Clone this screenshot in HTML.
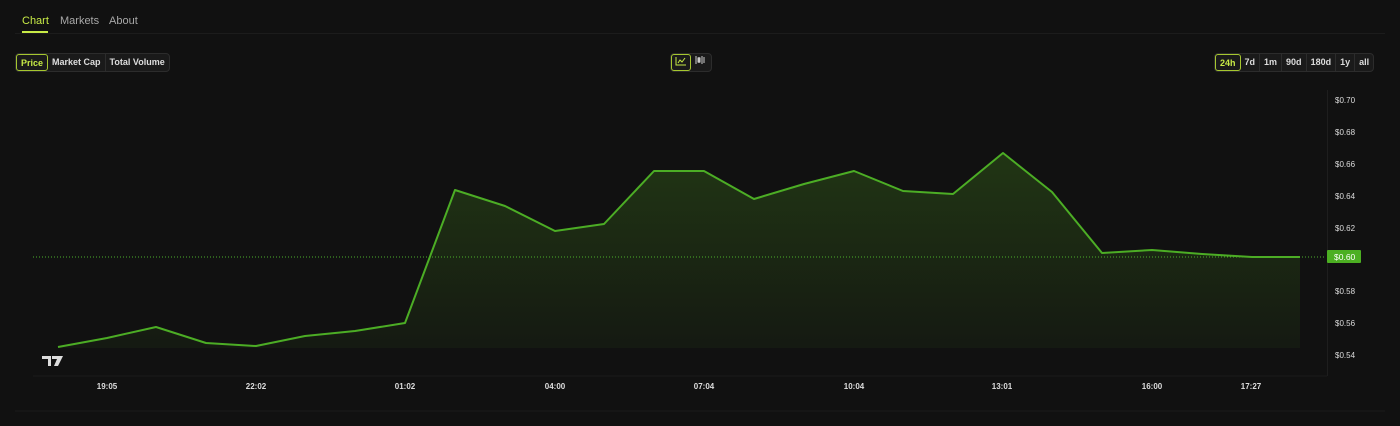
<!DOCTYPE html>
<html><head><meta charset="utf-8"><style>
*{margin:0;padding:0;box-sizing:border-box}
body{width:1400px;height:426px;background:#111111;font-family:"Liberation Sans",sans-serif;color:#ccc;position:relative;overflow:hidden}
.tab{position:absolute;top:15px;font-size:11px;color:#a8a8a8}
.grp{position:absolute;top:53px;height:19px;display:flex;border:1px solid #2c2c2c;border-radius:4px;background:#1a1a1a}
.grp div{font-size:9px;color:#ddd;padding:0 4px;line-height:17px;border-right:1px solid #2c2c2c;font-weight:bold}
.grp div:last-child{border-right:none}
.grp .on{border:1px solid #a6c72f;color:#c7ea46;border-radius:3px}
.yl{position:absolute;left:1335px;font-size:8px;color:#ddd}
.xl{position:absolute;top:382px;font-size:8px;color:#ddd;transform:translateX(-50%);font-weight:bold}
</style></head><body>
<div class="tab" style="left:22px;color:#c7ea46">Chart</div>
<div style="position:absolute;left:22px;top:31px;width:26px;height:2px;background:#c7ea46"></div>
<div class="tab" style="left:60px">Markets</div>
<div class="tab" style="left:109px">About</div>
<div style="position:absolute;left:15px;top:33px;width:1370px;height:1px;background:#1c1c1c"></div>
<div class="grp" style="left:15px"><div class="on">Price</div><div>Market Cap</div><div>Total Volume</div></div>
<div class="grp" style="left:670px"><div class="on" style="width:20px;padding:0 3px"><svg width="12" height="10" viewBox="0 0 12 10"><path d="M1 1V9H11M3 7L5 4L7 6L10 2" stroke="#c7ea46" fill="none" stroke-width="1"/></svg></div><div style="width:20px;padding:0 3px"><svg width="12" height="10" viewBox="0 0 12 10"><path d="M2 1V9M5 2V8M4 3H6V7H4ZM8 1V9M10 2V8" stroke="#ccc" fill="none" stroke-width="1"/></svg></div></div>
<div class="grp" style="left:1214px"><div class="on">24h</div><div>7d</div><div>1m</div><div>90d</div><div>180d</div><div>1y</div><div>all</div></div>
<svg style="position:absolute;left:0;top:0" width="1400" height="426">
<defs><linearGradient id="g" x1="0" y1="0" x2="0" y2="1"><stop offset="0" stop-color="#3f7a1a" stop-opacity=".35"/><stop offset="1" stop-color="#3f7a1a" stop-opacity=".08"/></linearGradient></defs>
<polygon fill="url(#g)" points="58,347 107,338 156,327 206,343 256,346 305,336 355,331 405,323 455,190 505,206 555,231 604,224 654,171 704,171 754,199 804,184 854,171 903,191 953,194 1003,153 1052,192 1102,253 1152,250 1202,254 1252,257 1300,257 1300,348 58,348"/>
<line x1="33" y1="257" x2="1326" y2="257" stroke="#4caf2a" stroke-dasharray="1,2" stroke-width="1"/>
<polyline fill="none" stroke="#4cad25" stroke-width="2" stroke-linejoin="round" points="58,347 107,338 156,327 206,343 256,346 305,336 355,331 405,323 455,190 505,206 555,231 604,224 654,171 704,171 754,199 804,184 854,171 903,191 953,194 1003,153 1052,192 1102,253 1152,250 1202,254 1252,257 1300,257"/>
<line x1="1327.5" y1="90" x2="1327.5" y2="376" stroke="#1e1e1e"/>
<line x1="33" y1="376" x2="1327" y2="376" stroke="#1a1a1a"/>
<line x1="15" y1="411" x2="1385" y2="411" stroke="#1c1c1c"/>
<rect x="1327" y="250" width="34" height="13" rx="1" fill="#4caf22"/>
<text x="1334" y="260" font-size="8.5" fill="#fff" font-family="Liberation Sans">$0.60</text>
<path d="M42 356H51V366H48V359H42Z M52 356H63L58 366H54L57 359H52Z" fill="#ddd"/>
</svg>
<div class="yl" style="top:96px">$0.70</div>
<div class="yl" style="top:128px">$0.68</div>
<div class="yl" style="top:160px">$0.66</div>
<div class="yl" style="top:192px">$0.64</div>
<div class="yl" style="top:224px">$0.62</div>
<div class="yl" style="top:287px">$0.58</div>
<div class="yl" style="top:319px">$0.56</div>
<div class="yl" style="top:351px">$0.54</div>
<div class="xl" style="left:107px">19:05</div>
<div class="xl" style="left:256px">22:02</div>
<div class="xl" style="left:405px">01:02</div>
<div class="xl" style="left:555px">04:00</div>
<div class="xl" style="left:704px">07:04</div>
<div class="xl" style="left:854px">10:04</div>
<div class="xl" style="left:1002px">13:01</div>
<div class="xl" style="left:1152px">16:00</div>
<div class="xl" style="left:1251px">17:27</div>
</body></html>
